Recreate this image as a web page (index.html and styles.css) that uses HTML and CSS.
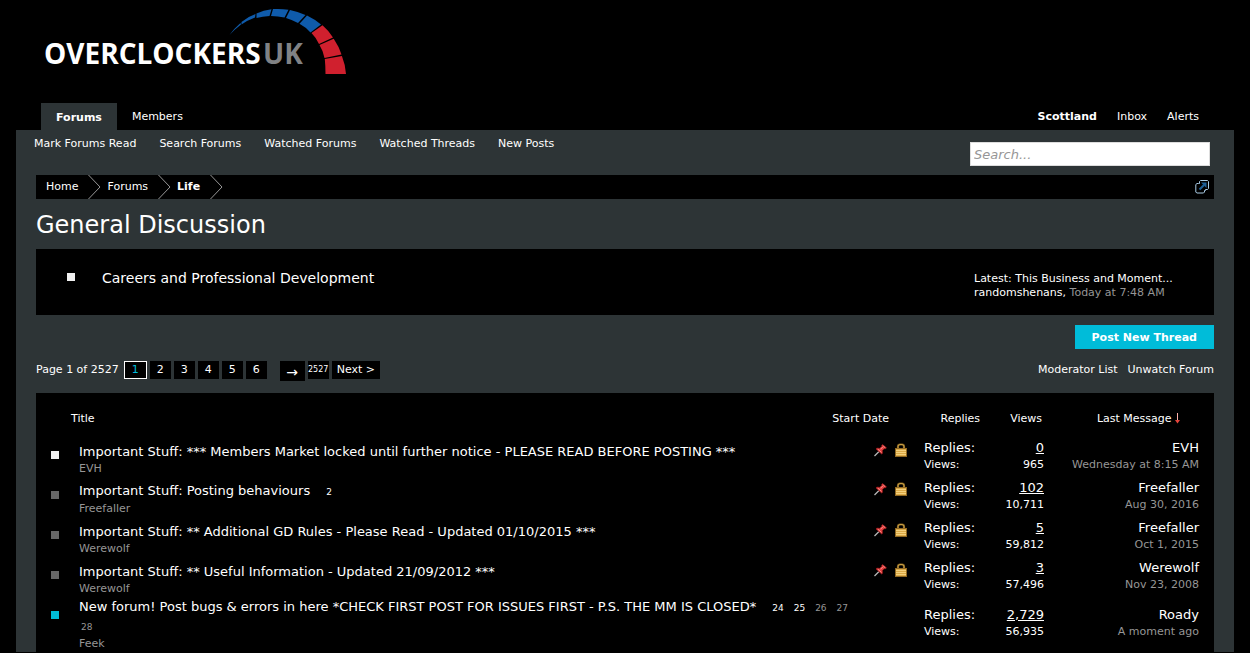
FILE: index.html
```
<!DOCTYPE html>
<html lang="en">
<head>
<meta charset="utf-8">
<title>General Discussion | Overclockers UK Forums</title>
<link rel="stylesheet" href="styles.css">
</head>
<body>
<svg class="sprites" aria-hidden="true">
  <symbol id="pin" viewBox="0 0 13 14">
    <path d="M.5 13 L5 8.500" stroke="#b8b8b8" stroke-width="1.2"/>
    <path d="M8.500 1.500 L12.500 4.800 L11.500 5.800 L10.200 5.800 L8.400 7.600 L8.600 10.300 L7.600 11 L2 6 L2.800 5.100 L5.600 5.300 L7.800 3.400 L7.700 2.300 Z" fill="#e0403f" stroke="#8d1718" stroke-width=".7"/>
    <path d="M9.200 2.900 L11.200 4.700 M4 6.300 L7.400 9.400 M6.600 6 L8.800 4.200" stroke="#ff9590" stroke-width=".9" fill="none"/>
  </symbol>
  <symbol id="lock" viewBox="0 0 12 14">
    <path d="M3 6 V3.500 Q3 1.500 5 1.500 H7 Q9 1.500 9 3.500 V6" fill="none" stroke="#7d5b1e" stroke-width="2.200"/>
    <path d="M3 6 V3.500 Q3 1.500 5 1.500 H7 Q9 1.500 9 3.500 V6" fill="none" stroke="#d9b04e" stroke-width=".8"/>
    <rect x=".5" y="5.500" width="11" height="8" fill="#dba946" stroke="#8f6722"/>
    <path d="M1 7.500 H11 M1 9.500 H11 M1 11.500 H11" stroke="#f3cf7c" stroke-width="1"/>
  </symbol>
</svg>

<header class="header">
  <a class="logo" href="#" aria-label="Overclockers UK">
    <svg width="310" height="80" viewBox="40 0 310 80">
      <g fill="#0f5bab">
        <path d="M229.500 35 Q234.500 28 240.500 23 L241 24.500 Q234.500 29.500 229.500 35Z"/>
        <path d="M241.500 22 Q248 16.500 255.500 14 L255 17.500 Q248 20 241.500 24.500Z"/>
        <path d="M256.500 13.500 Q263.500 10 271.500 9.200 L269.500 16 Q262.500 16.500 256.500 18Z"/>
        <path d="M273 9.100 Q280.500 8.500 288.500 9.800 L284.500 17.500 Q278 16 271 16Z"/>
        <path d="M290 10.100 Q298.500 12 305.500 15 L298 23 Q292.500 20 286 18Z"/>
        <path d="M307 15.600 Q315 19.500 321 24.500 L310.500 32.500 Q305.500 27 299.500 23.800Z"/>
      </g>
      <g fill="#d0202e">
        <path d="M322.500 25.300 Q329 31 333 37.500 L319 44 Q316 37.500 311.500 33Z"/>
        <path d="M333.700 38.700 Q339 46.500 341.500 54.500 L324.500 58 Q323 50.500 319.500 45Z"/>
        <path d="M341.900 56 Q345.500 65 346 74 H325.500 Q325.500 66 324.800 59Z"/>
      </g>
      <text class="logo-name" x="44" y="64">OVERCLOCKERS</text>
      <text class="logo-name logo-uk" x="263" y="64">UK</text>
    </svg>
  </a>
  <nav class="tabs">
    <a class="tab tab-active" href="#">Forums</a>
    <a class="tab" href="#">Members</a>
    <span class="account">
      <a href="#"><b>Scottland</b></a>
      <a href="#">Inbox</a>
      <a href="#">Alerts</a>
    </span>
  </nav>
</header>

<main class="page">
  <div class="subnav">
    <nav class="subnav-links">
      <a href="#">Mark Forums Read</a>
      <a href="#">Search Forums</a>
      <a href="#">Watched Forums</a>
      <a href="#">Watched Threads</a>
      <a href="#">New Posts</a>
    </nav>
    <input class="search" type="search" placeholder="Search..." aria-label="Search">
  </div>

  <nav class="crumbs" aria-label="Breadcrumb">
    <a href="#">Home</a>
    <svg class="chevron" width="13" height="24"><path d="M.5 0 L12 12 L.5 24"/></svg>
    <a href="#">Forums</a>
    <svg class="chevron" width="13" height="24"><path d="M.5 0 L12 12 L.5 24"/></svg>
    <a href="#"><b>Life</b></a>
    <svg class="chevron" width="13" height="24"><path d="M.5 0 L12 12 L.5 24"/></svg>
    <a class="jump" href="#" aria-label="Open quick navigation">
      <svg width="14" height="14" fill="none">
        <path d="M3.500 3.500 H2 L.8 4.500 V12 L1.800 13 H8.500 L9.500 12 V10.500" stroke="#a9cbe4"/>
        <path d="M3.500 3.500 H4.500 V1.500 L5.500 .5 H12.500 L13.500 1.500 V8.500 L12.500 9.500 H10.500 V10.500 H9.500" stroke="#a9cbe4"/>
        <path d="M4.500 9.500 L9 5" stroke="#1d5f97" stroke-width="2.200"/>
        <path d="M6 2.500 H11.500 V8 Z" fill="#1d5f97"/>
      </svg>
    </a>
  </nav>

  <h1>General Discussion</h1>

  <section class="subforum">
    <span class="square unread"></span>
    <a class="subforum-name" href="#">Careers and Professional Development</a>
    <div class="latest">
      <div>Latest: <a href="#">This Business and Moment...</a></div>
      <div><a href="#">randomshenans,</a> <span class="muted">Today at 7:48 AM</span></div>
    </div>
  </section>

  <div class="actions"><button class="post" type="button">Post New Thread</button></div>

  <div class="paging-row">
    <nav class="paging" aria-label="Pages">
      <span class="paging-label">Page 1 of 2527</span>
      <a class="num current" href="#">1</a>
      <a class="num" href="#">2</a>
      <a class="num" href="#">3</a>
      <a class="num" href="#">4</a>
      <a class="num" href="#">5</a>
      <a class="num" href="#">6</a>
      <a class="num arrow" href="#">→</a>
      <a class="num last" href="#">2527</a>
      <a class="num next" href="#">Next &gt;</a>
    </nav>
    <div class="forum-links"><a href="#">Moderator List</a><a href="#">Unwatch Forum</a></div>
  </div>

  <table class="threads">
    <colgroup><col class="c-state"><col><col class="c-start"><col class="c-replies"><col class="c-views"><col class="c-last"></colgroup>
    <thead>
      <tr>
        <th class="h-title" colspan="2">Title</th>
        <th class="h-start">Start Date</th>
        <th class="h-replies">Replies</th>
        <th class="h-views">Views</th>
        <th class="h-last">Last Message <svg width="5" height="11"><path d="M2.500 0 V9" stroke="#ffb0a8"/><path d="M0 7 H5 L2.500 10.500 Z" fill="#e8453c"/></svg></th>
      </tr>
    </thead>
    <tbody>
      <tr>
        <td class="state"><span class="square unread"></span></td>
        <td class="topic" colspan="2"><div class="entry"><div class="subject"><span class="prefix">Important Stuff:</span> <a href="#">*** Members Market locked until further notice - PLEASE READ BEFORE POSTING ***</a></div>
          <div class="marks"><svg width="13" height="14"><use href="#pin"/></svg><svg width="12" height="14"><use href="#lock"/></svg></div></div>
          <a class="author" href="#">EVH</a></td>
        <td class="stats" colspan="2"><div class="stat replies"><span>Replies:</span><u>0</u></div><div class="stat"><span>Views:</span><span>965</span></div></td>
        <td class="last-post"><a href="#">EVH</a><time>Wednesday at 8:15 AM</time></td>
      </tr>
      <tr>
        <td class="state"><span class="square"></span></td>
        <td class="topic" colspan="2"><div class="entry"><div class="subject"><span class="prefix">Important Stuff:</span> <a href="#">Posting behaviours</a><span class="pages"><a href="#">2</a></span></div>
          <div class="marks"><svg width="13" height="14"><use href="#pin"/></svg><svg width="12" height="14"><use href="#lock"/></svg></div></div>
          <a class="author" href="#">Freefaller</a></td>
        <td class="stats" colspan="2"><div class="stat replies"><span>Replies:</span><u>102</u></div><div class="stat"><span>Views:</span><span>10,711</span></div></td>
        <td class="last-post"><a href="#">Freefaller</a><time>Aug 30, 2016</time></td>
      </tr>
      <tr>
        <td class="state"><span class="square"></span></td>
        <td class="topic" colspan="2"><div class="entry"><div class="subject"><span class="prefix">Important Stuff:</span> <a href="#">** Additional GD Rules - Please Read - Updated 01/10/2015 ***</a></div>
          <div class="marks"><svg width="13" height="14"><use href="#pin"/></svg><svg width="12" height="14"><use href="#lock"/></svg></div></div>
          <a class="author" href="#">Werewolf</a></td>
        <td class="stats" colspan="2"><div class="stat replies"><span>Replies:</span><u>5</u></div><div class="stat"><span>Views:</span><span>59,812</span></div></td>
        <td class="last-post"><a href="#">Freefaller</a><time>Oct 1, 2015</time></td>
      </tr>
      <tr>
        <td class="state"><span class="square"></span></td>
        <td class="topic" colspan="2"><div class="entry"><div class="subject"><span class="prefix">Important Stuff:</span> <a href="#">** Useful Information - Updated 21/09/2012 ***</a></div>
          <div class="marks"><svg width="13" height="14"><use href="#pin"/></svg><svg width="12" height="14"><use href="#lock"/></svg></div></div>
          <a class="author" href="#">Werewolf</a></td>
        <td class="stats" colspan="2"><div class="stat replies"><span>Replies:</span><u>3</u></div><div class="stat"><span>Views:</span><span>57,496</span></div></td>
        <td class="last-post"><a href="#">Werewolf</a><time>Nov 23, 2008</time></td>
      </tr>
      <tr class="long">
        <td class="state"><span class="square fresh"></span></td>
        <td class="topic" colspan="2"><div class="entry"><div class="subject"><a href="#">New forum! Post bugs &amp; errors in here *CHECK FIRST POST FOR ISSUES FIRST - P.S. THE MM IS CLOSED*</a><span class="pages"><a href="#">24</a><a href="#">25</a><a class="muted" href="#">26</a><a class="muted" href="#">27</a><wbr><a class="muted" href="#">28</a></span></div></div>
          <a class="author" href="#">Feek</a></td>
        <td class="stats" colspan="2"><div class="stat replies"><span>Replies:</span><u>2,729</u></div><div class="stat"><span>Views:</span><span>56,935</span></div></td>
        <td class="last-post"><a href="#">Roady</a><time>A moment ago</time></td>
      </tr>
    </tbody>
  </table>
</main>
</body>
</html>
```

FILE: styles.css
```
* { box-sizing: border-box; }
body {
  margin: 0;
  padding: 0 16px;
  background: #000;
  color: #fff;
  font: 11px/14px Verdana, "DejaVu Sans", sans-serif;
}
a { color: inherit; text-decoration: none; }
svg { display: block; }
.sprites { display: none; }
.muted { color: #969696; }

/* header */
.logo { display: block; width: 310px; margin-left: 24px; }
.logo-name { font: bold 28px "Open Sans", sans-serif; fill: #fff; }
.logo-uk { fill: #808285; }
.tabs { display: flex; align-items: flex-end; padding: 23px 25px 0; }
.tab { height: 27px; padding: 0 15px; line-height: 27px; }
.tab-active { background: #2d3436; font-weight: bold; line-height: 30px; }
.account { display: flex; gap: 20px; margin-left: auto; padding-right: 10px; line-height: 27px; }

/* page */
.page { background: #2d3436; padding: 0 20px; }
.subnav { display: flex; justify-content: space-between; height: 45px; padding-right: 4px; }
.subnav-links { display: flex; gap: 23px; line-height: 27px; margin-left: -2px; }
.search {
  width: 240px;
  height: 24px;
  margin: 12px 0 0;
  padding: 0 3px;
  border: 1px solid #ddd;
  background: #fff;
  font: 13px Verdana, "DejaVu Sans", sans-serif;
  appearance: none;
}
.search::placeholder { color: #969696; font-style: italic; }
.crumbs { display: flex; align-items: center; height: 24px; padding: 0 5px 0 10px; background: #000; }
.chevron { margin: 0 6px 0 10px; fill: none; stroke: #969696; }
.jump { margin-left: auto; }
h1 { margin: 0; padding: 11px 0 9px; font-size: 24px; font-weight: normal; line-height: 30px; }

.subforum { display: flex; align-items: flex-start; min-height: 66px; padding: 22px 15px 0 31px; background: #000; }
.square { display: block; width: 8px; height: 8px; background: #666; }
.unread { background: #f0f0f0; }
.fresh { background: #00bcd9; }
.subforum .square { margin: 2px 27px 0 0; }
.subforum-name { font-size: 14px; }
.latest { width: 225px; margin-left: auto; padding-top: 1px; }

.actions { display: flex; justify-content: flex-end; padding: 10px 0 12px; }
.post {
  height: 24px;
  padding: 0 17px;
  border: 0;
  background: #00bcd9;
  color: #fff;
  font: bold 11px Verdana, "DejaVu Sans", sans-serif;
}
.paging-row { display: flex; justify-content: space-between; align-items: flex-start; height: 32px; line-height: 18px; }
.paging { display: flex; gap: 3px; align-items: flex-start; }
.paging-label { margin-right: 2px; }
.num { min-width: 21px; height: 18px; background: #000; text-align: center; }
.current { width: 23px; border: 1px solid #fff; color: #00bcd9; line-height: 16px; }
.arrow { width: 25px; height: 20px; margin-left: 10px; font-size: 14px; line-height: 22px; }
.last { font-size: 8px; }
.next { padding: 0 5px; }
.forum-links { display: flex; gap: 10px; }

/* threads */
.threads { width: 100%; background: #000; border-spacing: 0; table-layout: fixed; }
.threads th { height: 45px; padding: 7px 0 0; font-weight: normal; }
.threads td { height: 40px; padding: 0; vertical-align: middle; }
.threads .topic { padding-top: 3px; }
.threads .long td { height: 54px; }
.threads .long .topic { padding-top: 0; }
.c-state { width: 43px; }
.c-start { width: 89px; }
.c-replies { width: 86px; }
.c-views { width: 64px; }
.c-last { width: 155px; }
.threads .h-title { padding-left: 35px; text-align: left; }
.threads .h-start { padding-right: 20px; text-align: right; white-space: nowrap; }
.threads .h-replies { padding-right: 15px; text-align: right; }
.threads .h-views { padding-right: 17px; text-align: right; }
.threads .h-last { padding-right: 34px; text-align: right; white-space: nowrap; }
.h-last svg { display: inline; vertical-align: -2px; }
.threads .state { padding: 13px 15px 0; vertical-align: top; }
.entry { display: flex; justify-content: space-between; font-size: 13px; line-height: 18px; }
.subject { max-width: 782px; }
.marks { display: flex; gap: 8px; margin-right: 2px; }
.author { display: block; color: #969696; line-height: 16px; }
.pages { margin-left: 14px; font-size: 9px; }
.pages a { margin: 0 8px 0 2px; }
.threads .stats { padding: 0 15px 4px; }
.stat { display: flex; justify-content: space-between; line-height: 16px; }
.replies { font-size: 13px; line-height: 18px; }
.last-post { text-align: right; font-size: 13px; line-height: 18px; }
.threads .last-post { padding: 0 15px 4px 0; }
.last-post a, .last-post time { display: block; }
.last-post time { color: #969696; font-size: 11px; line-height: 16px; }
```
